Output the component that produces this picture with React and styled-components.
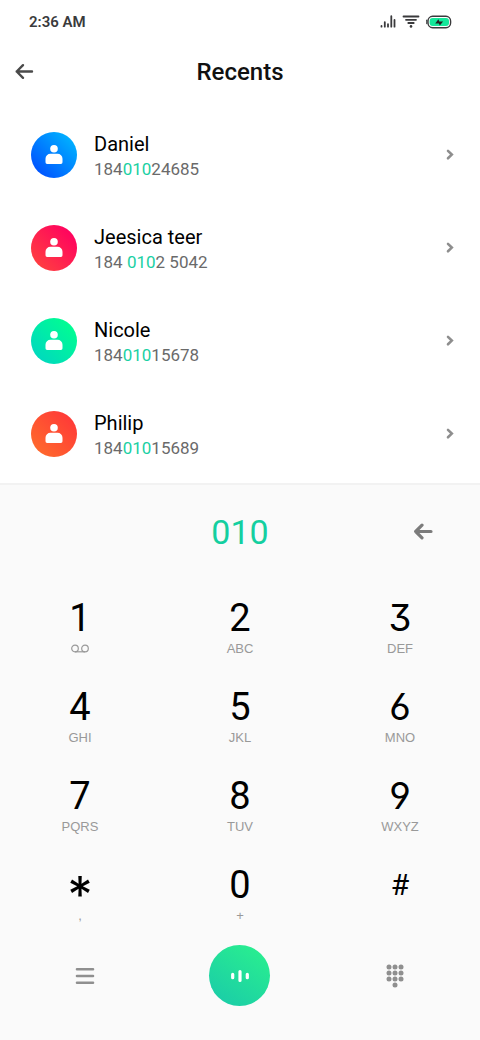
import React, { useCallback, useState } from 'react';
import styled, { createGlobalStyle, css } from 'styled-components';

const GlobalStyle = createGlobalStyle`
  * {
    box-sizing: border-box;
  }

  body {
    margin: 0;
    background: #fff;
    font-family: Roboto, sans-serif;
  }

  button, input {
    margin: 0;
    padding: 0;
    border: 0;
    background: none;
    color: inherit;
    font-family: inherit;
  }

  button {
    cursor: pointer;
  }

  svg {
    display: block;
  }
`;

const Screen = styled.div`
  min-height: 100vh;
  display: flex;
  flex-direction: column;
`;

const StatusBar = styled.div`
  height: 44px;
  padding: 0 28px 0 29px;
  display: flex;
  align-items: center;
  justify-content: space-between;
  color: #3a3a3c;
  font-size: 15px;
  font-weight: 600;
`;

const StatusIcons = styled.div`
  display: flex;
  align-items: center;
  gap: 6px;
`;

const Header = styled.header`
  height: 56px;
  padding: 0 12px;
  display: grid;
  grid-template-columns: 24px 1fr 24px;
  align-items: center;
`;

const IconButton = styled.button`
  display: flex;
  align-items: center;
  justify-content: center;
  justify-self: center;
  color: ${props => props.$color};
`;

const Title = styled.h1`
  margin: 0;
  color: #111;
  font-size: 24px;
  font-weight: 500;
  text-align: center;
`;

const ContactList = styled.ul`
  margin: 0;
  padding: 8px 0 3px;
  list-style: none;
`;

const ContactLink = styled.a`
  height: 93px;
  padding: 0 26px 0 31px;
  display: flex;
  align-items: center;
  gap: 17px;
  color: #8e8e8e;
  text-decoration: none;
`;

const Avatar = styled.div`
  width: 46px;
  height: 46px;
  border-radius: 50%;
  display: flex;
  align-items: center;
  justify-content: center;
  background: linear-gradient(225deg, ${props => props.$from} 10%, ${props => props.$to} 90%);
`;

const ContactInfo = styled.div`
  flex: 1;
  padding-top: 2px;
`;

const ContactName = styled.div`
  color: #000;
  font-size: 20px;
  line-height: 26px;
`;

const ContactPhone = styled.div`
  color: #6a6a6a;
  font-size: 17px;
  line-height: 24px;

  mark {
    background: none;
    color: #1ad0a3;
  }
`;

const Dialer = styled.section`
  flex: 1;
  padding-bottom: 32px;
  border-top: 2px solid #f2f2f2;
  background: #fafafa;
`;

const Columns = styled.div`
  display: grid;
  grid-template-columns: repeat(3, 1fr);
  align-items: center;
  justify-items: center;
`;

const NumberRow = styled(Columns)`
  height: 93px;
  padding: 0 8px;
`;

const NumberInput = styled.input`
  grid-column: 2;
  width: 100%;
  color: #14cfa0;
  font-size: 34px;
  text-align: center;
  outline: none;
`;

const EraseButton = styled(IconButton)`
  justify-self: end;
  margin-right: 39px;
`;

const Keypad = styled(Columns)`
  padding-top: 18px;
  row-gap: 27px;
`;

const Key = styled.button`
  width: 100%;
  display: flex;
  flex-direction: column;
  align-items: center;
`;

const symbolStyles = {
  round: css`
    font-family: Inter, sans-serif;
    font-feature-settings: 'cv03', 'cv04', 'cv09';
    font-size: 37px;
  `,
  star: css`
    padding-top: 20px;
    font-family: Inter, sans-serif;
    font-size: 50px;
  `,
  hash: css`
    font-size: 30px;
  `,
};

const KeySymbol = styled.span`
  height: 44px;
  display: flex;
  align-items: center;
  color: #000;
  font-size: 38px;
  font-weight: 400;
  line-height: 44px;
  ${props => symbolStyles[props.$kind]}
`;

const KeyLetters = styled.span`
  height: 18px;
  display: flex;
  align-items: center;
  color: #999;
  font-family: 'Liberation Sans', Arial, sans-serif;
  font-size: 13px;
  line-height: 18px;
`;

const ActionBar = styled(Columns)`
  padding: 20px 8px 0;
`;

const CallButton = styled.button`
  width: 61px;
  height: 61px;
  border-radius: 50%;
  display: flex;
  align-items: center;
  justify-content: center;
  background: linear-gradient(215deg, #2af08e 5%, #1acba9 95%);
`;

const contacts = [
  { name: 'Daniel', phone: ['184', '010', '24685'], from: '#00b4ff', to: '#0050ff' },
  { name: 'Jeesica teer', phone: ['184 ', '010', '2 5042'], from: '#ff0060', to: '#ff4040' },
  { name: 'Nicole', phone: ['184', '010', '15678'], from: '#00ff90', to: '#00d8c0' },
  { name: 'Philip', phone: ['184', '010', '15689'], from: '#ff3838', to: '#ff6a2c' },
];

const VoicemailIcon = () => (
  <svg width="18" height="10" viewBox="0 0 18 10" fill="none" stroke="currentColor" strokeWidth="1.2">
    <circle cx="4" cy="4.5" r="3.3" />
    <circle cx="14" cy="4.5" r="3.3" />
    <path d="M4 7.8h10" />
  </svg>
);

const keys = [
  { symbol: '1', letters: <VoicemailIcon /> },
  { symbol: '2', letters: 'ABC' },
  { symbol: '3', letters: 'DEF', kind: 'round' },
  { symbol: '4', letters: 'GHI' },
  { symbol: '5', letters: 'JKL' },
  { symbol: '6', letters: 'MNO', kind: 'round' },
  { symbol: '7', letters: 'PQRS' },
  { symbol: '8', letters: 'TUV' },
  { symbol: '9', letters: 'WXYZ', kind: 'round' },
  { symbol: '*', letters: ',', kind: 'star' },
  { symbol: '0', letters: '+' },
  { symbol: '#', letters: '', kind: 'hash' },
];

const SignalIcon = () => (
  <svg width="16" height="14" viewBox="0 0 16 14" fill="none" stroke="currentColor" strokeWidth="1.8" strokeLinecap="round">
    <path d="M1.5 11v.7M4.8 7.2v4.5M8 9.2v2.5M11.3 1.2v10.5M14.5 5v6.7" />
  </svg>
);

const WifiIcon = () => (
  <svg width="18" height="14" viewBox="0 0 18 14" fill="none" stroke="currentColor" strokeWidth="1.8" strokeLinecap="round">
    <path d="M1.5 1.5h15M4 4.8h10M6.3 8h5.4" />
    <circle cx="9" cy="11.4" r="1.3" fill="currentColor" stroke="none" />
  </svg>
);

const BatteryIcon = () => (
  <svg width="26" height="14" viewBox="0 0 26 14" fill="none">
    <path d="M.8 5.2v3.4" stroke="currentColor" strokeWidth="1.2" strokeLinecap="round" />
    <rect x="2" y="1.3" width="22.6" height="11.4" rx="4.6" stroke="currentColor" strokeWidth="1.4" />
    <rect x="3.6" y="3" width="19.4" height="8" rx="3" fill="#14e89a" />
    <path d="M9.2 8.4l3.2-4.2.9 2.2h3.8l-3.3 4.2-.9-2.2z" fill="#222" />
  </svg>
);

const ArrowLeftIcon = ({ strokeWidth }) => (
  <svg width="20" height="18" viewBox="0 0 20 18" fill="none" stroke="currentColor" strokeWidth={strokeWidth} strokeLinecap="round" strokeLinejoin="round">
    <path d="M18 8.5H2.7M9 2.2L2.7 8.5 9 14.8" />
  </svg>
);

const PersonIcon = () => (
  <svg width="18" height="20" viewBox="0 0 18 20" fill="#fff">
    <circle cx="9" cy="3.8" r="3.8" />
    <path d="M.5 13.8a5 5 0 015-5h7a5 5 0 015 5v3.5a1.6 1.6 0 01-1.6 1.6H2.1a1.6 1.6 0 01-1.6-1.6z" />
  </svg>
);

const ChevronIcon = () => (
  <svg width="8" height="12" viewBox="0 0 8 12" fill="none" stroke="currentColor" strokeWidth="2.6" strokeLinecap="round">
    <path d="M2 1.9l3.8 3.7L2 9.3" />
  </svg>
);

const MenuIcon = () => (
  <svg width="20" height="18" viewBox="0 0 20 18" fill="none" stroke="currentColor" strokeWidth="2.6" strokeLinecap="round">
    <path d="M2 2.3h16M2 9h16M2 15.7h16" />
  </svg>
);

const dots = [[3, 3], [9, 3], [15, 3], [3, 9], [9, 9], [15, 9], [3, 15], [9, 15], [15, 15], [9, 21]];

const DialpadIcon = () => (
  <svg width="18" height="24" viewBox="0 0 18 24" fill="currentColor">
    {dots.map(([x, y]) => <circle key={`${x}-${y}`} cx={x} cy={y} r="2.5" />)}
  </svg>
);

const VoiceIcon = () => (
  <svg width="18" height="12" viewBox="0 0 18 12" fill="none" stroke="#fff" strokeWidth="3.2" strokeLinecap="round">
    <path d="M1.7 4.3v3.4M9 1.6v8.8M16.3 4.3v3.4" />
  </svg>
);

const App = () => {
  const [number, setNumber] = useState('010');

  const handleChange = useCallback(event => setNumber(event.target.value), []);
  const eraseLast = useCallback(() => setNumber(value => value.slice(0, -1)), []);

  return (
    <Screen>
      <GlobalStyle />
      <StatusBar>
        <span>2:36 AM</span>
        <StatusIcons>
          <SignalIcon />
          <WifiIcon />
          <BatteryIcon />
        </StatusIcons>
      </StatusBar>
      <Header>
        <IconButton $color="#4a4a4a" aria-label="Back">
          <ArrowLeftIcon strokeWidth="2.4" />
        </IconButton>
        <Title>Recents</Title>
      </Header>
      <ContactList>
        {contacts.map(({ name, phone, from, to }) => (
          <li key={name}>
            <ContactLink href={`#${name}`}>
              <Avatar $from={from} $to={to}>
                <PersonIcon />
              </Avatar>
              <ContactInfo>
                <ContactName>{name}</ContactName>
                <ContactPhone>{phone[0]}<mark>{phone[1]}</mark>{phone[2]}</ContactPhone>
              </ContactInfo>
              <ChevronIcon />
            </ContactLink>
          </li>
        ))}
      </ContactList>
      <Dialer>
        <NumberRow>
          <NumberInput type="tel" aria-label="Phone number" value={number} onChange={handleChange} />
          <EraseButton $color="#7b7b7b" aria-label="Erase" onClick={eraseLast}>
            <ArrowLeftIcon strokeWidth="3.2" />
          </EraseButton>
        </NumberRow>
        <Keypad>
          {keys.map(({ symbol, letters, kind }) => (
            <Key key={symbol} aria-label={symbol} onClick={() => setNumber(value => value + symbol)}>
              <KeySymbol $kind={kind}>{symbol}</KeySymbol>
              <KeyLetters>{letters}</KeyLetters>
            </Key>
          ))}
        </Keypad>
        <ActionBar>
          <IconButton $color="#8f8f8f" aria-label="Menu">
            <MenuIcon />
          </IconButton>
          <CallButton aria-label="Call">
            <VoiceIcon />
          </CallButton>
          <IconButton $color="#8f8f8f" aria-label="Keypad">
            <DialpadIcon />
          </IconButton>
        </ActionBar>
      </Dialer>
    </Screen>
  );
};

export default App;
